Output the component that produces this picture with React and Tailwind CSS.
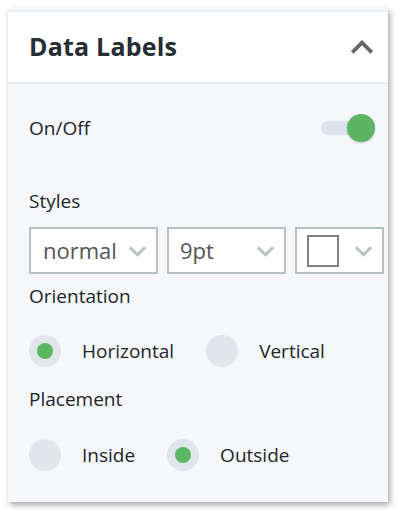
import React, { useState } from "react";

function Chevron({ className }) {
  return (
    <svg viewBox="0 0 20 12" className={className} fill="none" stroke="currentColor" strokeWidth="3">
      <path d="M2 2l8 8 8-8" />
    </svg>
  );
}

function Select({ children, className }) {
  return (
    <div className={`h-[47px] border-2 border-[#b6c0c4] bg-white flex items-center justify-between ${className}`}>
      {children}
      <Chevron className="w-[19px] h-[12px] text-[#b6c0c4] shrink-0" />
    </div>
  );
}

function Radio({ checked, label, onClick }) {
  return (
    <button onClick={onClick} className="flex items-center gap-[21px]">
      <span className="w-8 h-8 rounded-full bg-[#e0e6e9] flex items-center justify-center">
        {checked && <span className="w-4 h-4 rounded-full bg-[#5cb562]" />}
      </span>
      <span className="text-[19px] text-[#222629]">{label}</span>
    </button>
  );
}

export default function App() {
  const [on, setOn] = useState(true);
  const [orient, setOrient] = useState("h");
  const [place, setPlace] = useState("out");

  return (
    <div className="w-[400px] h-[514px] bg-white pt-[8px] pl-[8px]" style={{ fontFamily: '"Open Sans", "Noto Sans", sans-serif' }}>
      <div className="w-[380px] h-[494px] bg-[#f5f7fb] shadow-[2px_3px_6px_rgba(0,0,0,0.35)] flex flex-col">
        <div className="h-[2px] mt-[2px] bg-[#e6ecf1]" />
        <div className="h-[72px] bg-white border-b-2 border-[#e8edf2] flex items-center justify-between pl-[21px] pr-[13px]">
          <h1 className="text-[25px] font-bold text-[#262d33] tracking-[0.2px]">Data Labels</h1>
          <svg viewBox="0 0 24 24" className="w-[26px] h-[26px] text-[#666]" fill="none" stroke="currentColor" strokeWidth="3.4">
            <path d="M3 17l9-9 9 9" />
          </svg>
        </div>

        <div className="pl-[21px] pr-[13px] pt-[29px]">
          <div className="flex items-center justify-between h-[30px]">
            <span className="text-[19px] text-[#222629]">On/Off</span>
            <button onClick={() => setOn(!on)} className="relative w-[54px] h-[28px] flex items-center">
              <span className="absolute left-0 w-[40px] h-[14px] rounded-full bg-[#dde3e6]" />
              <span className={`absolute w-[28px] h-[28px] rounded-full shadow-[0_1px_2px_rgba(0,0,0,0.2)] ${on ? "left-[26px] bg-[#5cb562]" : "left-0 bg-[#fafafa]"}`} />
            </button>
          </div>

          <div className="mt-[45px] text-[19px] text-[#222629] leading-[26px]">Styles</div>
          <div className="mt-[13px] flex gap-[9px] mr-[-9px]">
            <Select className="w-[129px] pl-[12px] pr-[9px]">
              <span className="text-[22px] text-[#555]">normal</span>
            </Select>
            <Select className="w-[119px] pl-[11px] pr-[9px]">
              <span className="text-[22px] text-[#555]">9pt</span>
            </Select>
            <Select className="w-[89px] pl-[10px] pr-[9px]">
              <span className="w-[32px] h-[32px] border-2 border-[#808080] bg-white" />
            </Select>
          </div>

          <div className="mt-[9px] text-[19px] text-[#222629] leading-[26px]">Orientation</div>
          <div className="mt-[26px] flex gap-[32px]">
            <Radio checked={orient === "h"} label="Horizontal" onClick={() => setOrient("h")} />
            <Radio checked={orient === "v"} label="Vertical" onClick={() => setOrient("v")} />
          </div>

          <div className="mt-[19px] text-[19px] text-[#222629] leading-[26px]">Placement</div>
          <div className="mt-[27px] flex gap-[32px]">
            <Radio checked={place === "in"} label="Inside" onClick={() => setPlace("in")} />
            <Radio checked={place === "out"} label="Outside" onClick={() => setPlace("out")} />
          </div>
        </div>
      </div>
    </div>
  );
}
